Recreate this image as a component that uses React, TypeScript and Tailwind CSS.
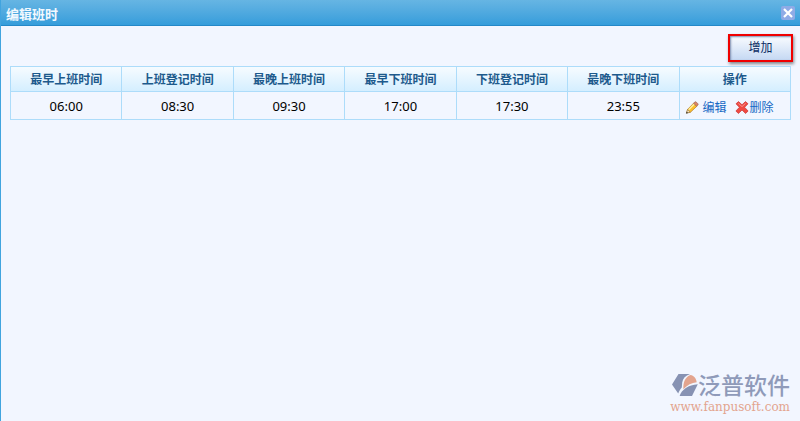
const COLUMNS = [
  "最早上班时间",
  "上班登记时间",
  "最晚上班时间",
  "最早下班时间",
  "下班登记时间",
  "最晚下班时间",
];

const SHIFTS = [{ id: 1, times: ["06:00", "08:30", "09:30", "17:00", "17:30", "23:55"] }];

function CloseIcon() {
  return (
    <svg viewBox="0 0 14 14" className="h-[14px] w-[14px]" aria-hidden="true">
      <rect width="14" height="14" rx="2" fill="#8fabe6" />
      <path d="M3 3l8 8M11 3l-8 8" stroke="#fff" strokeWidth="2.2" />
    </svg>
  );
}

function PencilIcon() {
  return (
    <svg viewBox="0 0 14 14" className="h-[14px] w-[14px]" aria-hidden="true">
      <path d="M1.5 11.9l1.2-3.6L8.6 2.2l3.2 3.1-6.4 6z" fill="#fbc02d" stroke="#b57a24" strokeWidth=".7" />
      <path d="M3.6 8.7l5.8-5.6" stroke="#fff0a0" strokeWidth="1.4" />
      <path d="M8.6 2.2l1-1c.6-.6 1.2-.6 1.8 0l1.3 1.3c.6.6.6 1.2 0 1.8l-1 1z" fill="#dd8466" stroke="#8a5a48" strokeWidth=".6" />
      <path d="M1.4 12.2l1.2-3.7 2.7 2.6z" fill="#f3dfba" stroke="#7a5a28" strokeWidth=".5" />
      <path d="M1.1 12.6l.6-1.9 1.4 1.3z" fill="#333" />
    </svg>
  );
}

function DeleteIcon() {
  return (
    <svg viewBox="0 0 14 14" className="h-[14px] w-[14px]" aria-hidden="true">
      <path
        d="M1 2.8L3.5.6 7 3.8 10.5.6 13 2.8 9.6 6.3l3.5 3.7-2.5 2.5L7 9l-3.600 3.500L.9 10l3.500-3.700z"
        fill="#f04a42"
        stroke="#c83434"
        strokeWidth=".7"
        strokeLinejoin="round"
      />
      <path d="M3.4 2.3L7 5.6l3.6-3.3" fill="none" stroke="#f9918b" strokeWidth="1" />
    </svg>
  );
}

function LogoMark() {
  return (
    <svg viewBox="0 0 26 24" className="h-6 w-[26px]" aria-hidden="true">
      <path d="M6.5 1h11.5C13.5 2.5 10.8 5.5 10.2 9.5L9.8 14.5C8.3 16.2 7.2 18 6.2 20.5L0 11.5z" fill="#8792b3" />
      <path d="M18.5 2c3.2.6 5.8 3.2 6.2 7.2-5 .4-9.5 2.8-13.3 7-.5-7.2 2.1-12.4 7.1-14.2z" fill="#e3a48e" />
      <path d="M25.8 11.3L20 23H7.6c2-6.2 8.7-11.2 18.2-11.7z" fill="#8792b3" />
    </svg>
  );
}

function TitleBar() {
  return (
    <header className="flex h-[26px] items-center justify-between border-b border-[#2488c8] bg-linear-to-b from-[#66b5e3] to-[#359ddb] px-[5px]">
      <h1 className="pt-[2px] text-[13px] leading-5 font-bold text-[#f2f9ff]">编辑班时</h1>
      <button type="button" aria-label="关闭">
        <CloseIcon />
      </button>
    </header>
  );
}

function ShiftTable() {
  return (
    <table className="w-full table-fixed border-collapse text-center">
      <thead>
        <tr className="h-[25px] bg-linear-to-b from-[#f6fbff] to-[#d3eeff] text-xs text-[#1d5a8c]">
          {COLUMNS.map((column) => (
            <th key={column} className="border border-[#addcfa] pt-px font-bold">
              {column}
            </th>
          ))}
          <th className="border border-[#addcfa] pt-px font-bold">操作</th>
        </tr>
      </thead>
      <tbody>
        {SHIFTS.map((shift) => (
          <tr key={shift.id} className="h-7 text-[13px] text-black">
            {shift.times.map((time, index) => (
              <td key={index} className="border border-[#addcfa] pt-[2px]">
                {time}
              </td>
            ))}
            <td className="border border-[#addcfa] pl-[5px]">
              <div className="flex items-center gap-2 pt-1 text-xs leading-5 text-[#1468c4]">
                <a href="#edit" className="flex items-center gap-1">
                  <PencilIcon />
                  编辑
                </a>
                <a href="#delete" className="flex items-center gap-px">
                  <DeleteIcon />
                  删除
                </a>
              </div>
            </td>
          </tr>
        ))}
      </tbody>
    </table>
  );
}

export default function App() {
  return (
    <div className="flex min-h-screen flex-col border-l border-[#41a4df] bg-[#f2f6ff] font-['Noto_Sans','Noto_Sans_CJK_SC',sans-serif]">
      <TitleBar />
      <main className="flex flex-1 flex-col">
        <div className="flex justify-end pt-2 pr-[7px] pb-1">
          <button
            type="button"
            className="h-7 w-[65px] border-2 border-[#f00000] bg-linear-to-b from-[#fafcff] to-[#c5d8f3] text-xs text-[#0b2c63] shadow-[1px_2px_3px_rgba(0,0,0,0.45),inset_1px_1px_2px_#7d8db0]"
          >
            增加
          </button>
        </div>
        <div className="px-[9px]">
          <ShiftTable />
        </div>
        <footer className="mt-auto flex flex-col items-end pr-[10px] pb-2">
          <div className="flex items-center text-[23px] leading-6 font-medium text-[#8f9ab9]">
            <LogoMark />
            泛普软件
          </div>
          <a href="#home" className="pt-1 font-['DejaVu_Serif',serif] text-xs leading-3 text-[#e3a48e]">
            www.fanpusoft.com
          </a>
        </footer>
      </main>
    </div>
  );
}
